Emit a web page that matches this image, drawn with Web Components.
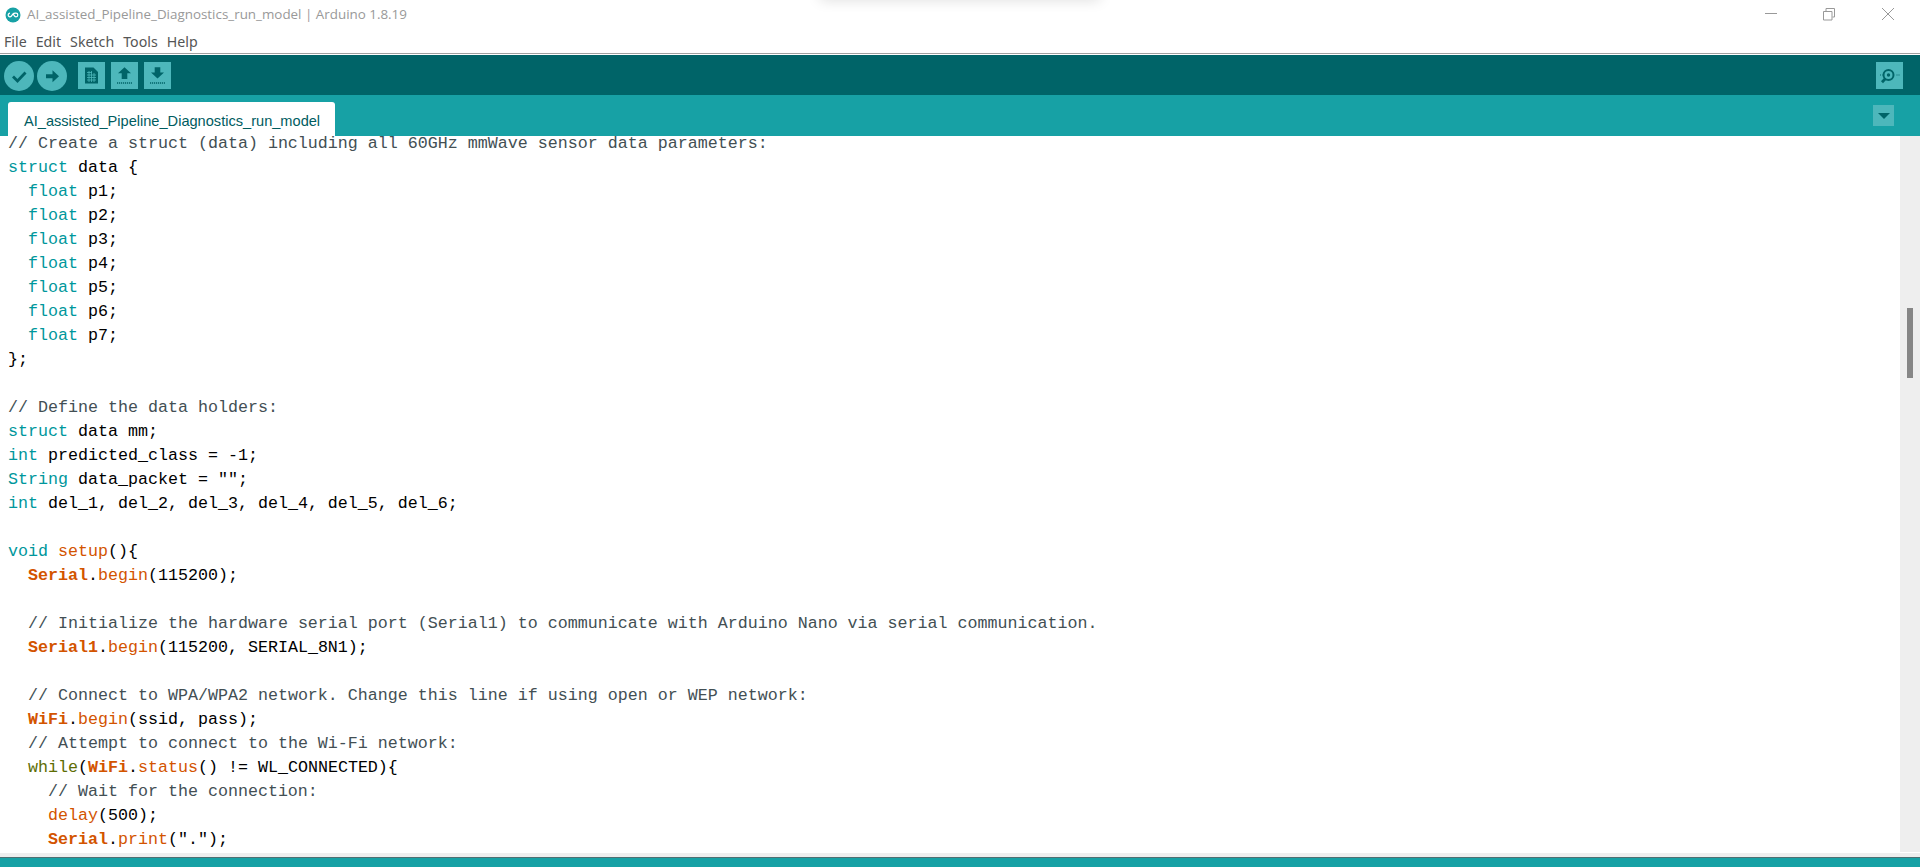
<!DOCTYPE html>
<html>
<head>
<meta charset="utf-8">
<title>Arduino</title>
<style>
  html, body { margin: 0; height: 100%; overflow: hidden; background: #fff; }
  body { display: flex; flex-direction: column; height: 867px; }
</style>
</head>
<body>
<win-titlebar>AI_assisted_Pipeline_Diagnostics_run_model | Arduino 1.8.19</win-titlebar>
<menu-bar></menu-bar>
<ide-toolbar></ide-toolbar>
<ide-tabs>AI_assisted_Pipeline_Diagnostics_run_model</ide-tabs>
<code-editor></code-editor>
<status-bar></status-bar>

<script>
class WinTitlebar extends HTMLElement {
    constructor() {
        super();
        const shadow = this.attachShadow({ mode: 'open' });
        shadow.innerHTML = `
        <style>
          :host {
            display: flex;
            align-items: center;
            flex: 0 0 29px;
            padding-left: 5px;
            background: #fff;
            position: relative;
            font: 13.400px "Open Sans", sans-serif;
            color: #999;
          }
          .logo { width: 16px; height: 16px; margin-right: 6px; flex: none; }
          .title { flex: 1; white-space: nowrap; padding-bottom: 1px; }
          .ctl { display: flex; }
          .ctl svg { display: block; width: 60px; height: 29px; }
          .toast {
            position: absolute; left: 820px; top: -12px; width: 280px; height: 12px;
            box-shadow: 0 0 14px rgba(0,0,0,.14);
          }
        </style>
        <svg class="logo" viewBox="0 0 16 16">
          <circle cx="8" cy="8" r="7.5" fill="#17a1a5"/>
          <path d="M5 6.200a1.800 1.800 0 1 0 0 3.600c1.400 0 2.400-2.300 3-3 .6-.7 1.600-.6 3-.6a1.800 1.800 0 1 1 0 3.600c-1.400 0-2.400-2.300-3-3" fill="none" stroke="#fff" stroke-width="1.200"/>
        </svg>
        <div class="title"><slot></slot></div>
        <div class="toast"></div>
        <div class="ctl">
          <svg viewBox="0 0 60 29"><path d="M25 13.500h12" stroke="#999" fill="none"/></svg>
          <svg viewBox="0 0 60 29"><path d="M23.500 11.500h8.500v8.500h-8.500zM26 11v-2.500h8.500v8.500h-2" fill="none" stroke="#999"/></svg>
          <svg viewBox="0 0 60 29"><path d="M22 8l12 12M34 8L22 20" stroke="#999" fill="none"/></svg>
        </div>
      `;
    }
}
customElements.define('win-titlebar', WinTitlebar);

class MenuBar extends HTMLElement {
    constructor() {
        super();
        const shadow = this.attachShadow({ mode: 'open' });
        const items = ['File', 'Edit', 'Sketch', 'Tools', 'Help'];
        shadow.innerHTML = `
        <style>
          :host {
            display: flex;
            flex: 0 0 26px;
            box-sizing: border-box;
            gap: 9px;
            align-items: center;
            padding: 0 0 2px 4px;
            background: #fff;
            font: 14.200px "Noto Sans", sans-serif;
            color: #555;
            position: relative;
          }
          :host::after {
            content: "";
            position: absolute;
            left: 0; right: 0; bottom: 1px;
            height: 1px;
            background: #a0a0a0;
          }
        </style>
        ${items.map(i => `<span>${i}</span>`).join('')}
      `;
    }
}
customElements.define('menu-bar', MenuBar);

class ToolButton extends HTMLElement {
    constructor() {
        super();
        const shadow = this.attachShadow({ mode: 'open' });
        shadow.innerHTML = `
        <style>
          :host {
            display: block;
            width: var(--size, 27px);
            height: var(--size, 27px);
            background: #4db7bb;
            border-radius: var(--radius, 0);
            flex: none;
          }
          ::slotted(svg) { display: block; width: 100%; height: 100%; }
        </style>
        <slot></slot>
      `;
    }
}
customElements.define('tool-button', ToolButton);

class IdeToolbar extends HTMLElement {
    constructor() {
        super();
        const shadow = this.attachShadow({ mode: 'open' });
        shadow.innerHTML = `
        <style>
          :host {
            display: flex;
            align-items: center;
            flex: 0 0 40px;
            padding: 1px 17px 0 4px;
            box-sizing: border-box;
            background: #006468;
          }
          .round { display: flex; gap: 3px; margin-right: 11px; --size: 30px; --radius: 50%; }
          .square { display: flex; gap: 6px; }
          .spacer { flex: 1; }
          svg { display: block; width: 100%; height: 100%; }
        </style>
        <div class="round">
          <tool-button><svg viewBox="0 0 30 30"><path d="M9 15.500l4.500 4.500 8-8.500" fill="none" stroke="#006468" stroke-width="2.800"/></svg></tool-button>
          <tool-button><svg viewBox="0 0 30 30"><path d="M9 13.300h6.500v-4l6.500 6-6.500 6v-4h-6.500z" fill="#006468"/></svg></tool-button>
        </div>
        <div class="square">
          <tool-button><svg viewBox="0 0 27 27"><path d="M7 5.500h8.500l4.500 4.500v11.500h-13z" fill="#006468"/><path d="M9 10.500h5M9 13h9M9 15.500h9M9 18h9M11 9v11M13.500 9v11M16 11v9" stroke="#4db7bb" stroke-width=".8" fill="none"/></svg></tool-button>
          <tool-button><svg viewBox="0 0 27 27"><path d="M13.500 5.300l6.500 6h-3.700v5.700h-5.600v-5.700h-3.700z" fill="#006468"/><path d="M6 21h15" stroke="#006468" stroke-width="1.400" stroke-dasharray="1.200 .8"/></svg></tool-button>
          <tool-button><svg viewBox="0 0 27 27"><path d="M10.700 5.300h5.600v5.200h3.700l-6.500 6-6.500-6h3.700z" fill="#006468"/><path d="M6 21h15" stroke="#006468" stroke-width="1.400" stroke-dasharray="1.200 .8"/></svg></tool-button>
        </div>
        <div class="spacer"></div>
        <tool-button><svg viewBox="0 0 27 27"><circle cx="12.500" cy="13" r="5" fill="none" stroke="#006468" stroke-width="2"/><circle cx="12.500" cy="13" r="1.700" fill="#006468"/><path d="M9.500 16.500l-3.500 3.800" stroke="#006468" stroke-width="2.800"/><path d="M4 13h2.500M20.500 13h3.500" stroke="#006468" stroke-dasharray="1 1"/></svg></tool-button>
      `;
    }
}
customElements.define('ide-toolbar', IdeToolbar);

class IdeTabs extends HTMLElement {
    constructor() {
        super();
        const shadow = this.attachShadow({ mode: 'open' });
        shadow.innerHTML = `
        <style>
          :host {
            display: flex;
            flex: 0 0 41px;
            box-sizing: border-box;
            padding: 7px 0 0 8px;
            background: #17a1a5;
          }
          .tab {
            box-sizing: border-box;
            width: 327px;
            padding: 9px 0 0 16px;
            background: #fff;
            border-radius: 3px 3px 0 0;
            font: 14.600px/20px "Liberation Sans", sans-serif;
            color: #005c5f;
            white-space: nowrap;
          }
          .spacer { flex: 1; }
          .menu {
            width: 21px; height: 21px;
            margin: 3px 26px 0 0;
            background: #4db7bb;
            display: flex; align-items: center; justify-content: center;
          }
          .menu i {
            width: 0; height: 0;
            border-left: 6px solid transparent;
            border-right: 6px solid transparent;
            border-top: 6px solid #006468;
          }
        </style>
        <div class="tab"><slot></slot></div>
        <div class="spacer"></div>
        <div class="menu"><i></i></div>
      `;
    }
}
customElements.define('ide-tabs', IdeTabs);

const CODE = `// Create a struct (data) including all 60GHz mmWave sensor data parameters:
struct data {
  float p1;
  float p2;
  float p3;
  float p4;
  float p5;
  float p6;
  float p7;
};

// Define the data holders:
struct data mm;
int predicted_class = -1;
String data_packet = "";
int del_1, del_2, del_3, del_4, del_5, del_6;

void setup(){
  Serial.begin(115200);

  // Initialize the hardware serial port (Serial1) to communicate with Arduino Nano via serial communication.
  Serial1.begin(115200, SERIAL_8N1);

  // Connect to WPA/WPA2 network. Change this line if using open or WEP network:
  WiFi.begin(ssid, pass);
  // Attempt to connect to the Wi-Fi network:
  while(WiFi.status() != WL_CONNECTED){
    // Wait for the connection:
    delay(500);
    Serial.print(".");`;

const TOKENS = /(\/\/.*$)|\b(struct|float|int|String|void)\b|\b(Serial1|Serial|WiFi)\b|\b(setup|begin|status|print|delay)\b|\b(while)\b/g;

function paint(line) {
    const esc = s => s.replace(/&/g, '&amp;').replace(/</g, '&lt;');
    let out = '', last = 0;
    for (const m of line.matchAll(TOKENS)) {
        out += esc(line.slice(last, m.index));
        const cls = m[1] ? 'c' : m[2] ? 'k' : m[3] ? 'o' : m[4] ? 'f' : 'w';
        out += `<span class="${cls}">${esc(m[0])}</span>`;
        last = m.index + m[0].length;
    }
    return out + esc(line.slice(last));
}

class CodeEditor extends HTMLElement {
    constructor() {
        super();
        const shadow = this.attachShadow({ mode: 'open' });
        shadow.innerHTML = `
        <style>
          :host {
            display: grid;
            grid-template-columns: 1fr 20px;
            grid-template-rows: 1fr 5px;
            flex: 1;
            min-height: 0;
            background: #fff;
          }
          .text {
            overflow: hidden;
            padding: 0 0 0 8px;
            margin-top: -4px;
            font: 16.670px/24px "Liberation Mono", monospace;
            color: #000;
            white-space: pre;
          }
          .line { height: 24px; }
          .c { color: #434f54; }
          .k { color: #00979c; }
          .o { color: #d35400; font-weight: bold; }
          .f { color: #d35400; }
          .w { color: #5e6d03; }
          .vbar {
            background: #eee;
            display: flex;
            justify-content: center;
            padding-top: 172px;
            box-sizing: border-box;
          }
          .thumb { width: 6px; height: 70px; background: #868686; }
          .hbar { grid-column: 1 / 3; background: #eee; border-top: 1px solid #fff; box-sizing: border-box; }
        </style>
        <div class="text">${CODE.split('\n').map(l => `<div class="line">${paint(l) || ' '}</div>`).join('')}</div>
        <div class="vbar"><div class="thumb"></div></div>
        <div class="hbar"></div>
      `;
    }
}
customElements.define('code-editor', CodeEditor);

class StatusBar extends HTMLElement {
    constructor() {
        super();
        const shadow = this.attachShadow({ mode: 'open' });
        shadow.innerHTML = `
        <style>
          :host {
            display: block;
            flex: 0 0 10px;
            box-sizing: border-box;
            background: #17a1a5;
            border-top: 1px solid #4f6f72;
          }
        </style>
      `;
    }
}
customElements.define('status-bar', StatusBar);
</script>
</body>
</html>
